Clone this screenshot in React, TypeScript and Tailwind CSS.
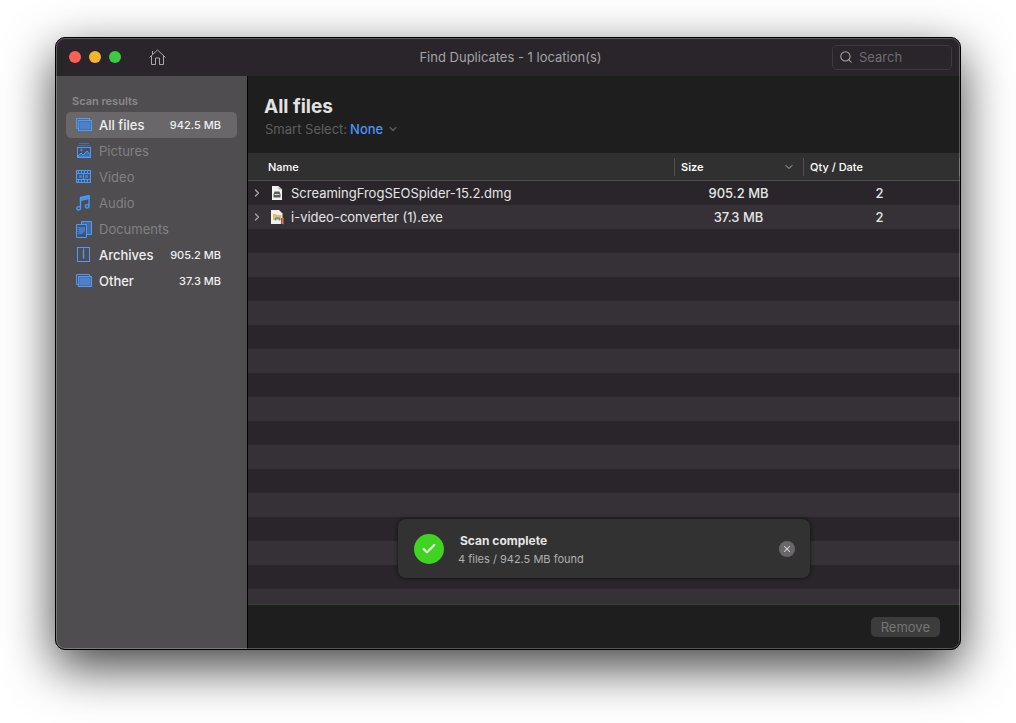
import { useState, type ReactNode } from 'react';
import { Check, ChevronDown, ChevronRight, Search, X } from 'lucide-react';

type Category = { name: string; icon: ReactNode; size?: string };

const StackIcon = () => (
  <svg viewBox="0 0 16 16" className="size-4" fill="none" stroke="#4a9bff">
    <path d="M2.5 11.5h-2v-10h13v2" />
    <rect x="2.5" y="3.5" width="13" height="10" fill="#4f6f9f" />
    <rect x="4" y="5" width="10" height="7" fill="#4f7fc8" stroke="none" />
  </svg>
);

const PicturesIcon = () => (
  <svg viewBox="0 0 16 16" className="size-4" fill="none" stroke="#4a9bff">
    <path d="M3 .5h10M2 2.5h12" opacity=".4" />
    <rect x="1.5" y="4.5" width="13" height="10" fill="#454f61" />
    <path d="M2 13l3-3 2 2 4-4 3.5 4v2H2z" fill="#3f6cab" />
    <circle cx="5.5" cy="7" r=".8" />
  </svg>
);

const VideoIcon = () => (
  <svg viewBox="0 0 16 16" className="size-4" fill="none" stroke="#4a9bff">
    <rect x=".5" y="1.5" width="14" height="12" fill="#44526b" />
    <path d="M3 6h3v3H3zM9 6h3v3H9z" fill="#4a78bb" stroke="none" />
    <path d="M1 4.5h13M1 10.5h13M7.5 4.5v6" />
    <path d="M2 3h12M2 12h12" strokeWidth="2" strokeDasharray="1 2" />
  </svg>
);

const AudioIcon = () => (
  <svg viewBox="0 0 16 16" className="size-4" fill="none" stroke="#4a9bff" strokeWidth="1.3">
    <path d="M4.5 13V2.500l8.500-2V11" />
    <path d="M4.5 3.500L13 1.500v2l-8.500 2z" fill="#3f6cab" />
    <ellipse cx="2.700" cy="13.300" rx="1.900" ry="1.700" />
    <ellipse cx="11.200" cy="11.300" rx="1.900" ry="1.700" />
  </svg>
);

const DocumentsIcon = () => (
  <svg viewBox="0 0 16 17" className="h-[17px] w-4" fill="none" stroke="#4a9bff">
    <path d="M5.5.5h10v13h-10z" fill="#466a9f" />
    <path d="M.5 3.5h10v13H.5z" fill="#44526b" />
    <path d="M3 6h6v4l-3 3H3z" fill="#3f7acb" stroke="none" />
    <path d="M2 6v8" strokeDasharray="1 1" />
  </svg>
);

const ArchiveIcon = () => (
  <svg viewBox="0 0 16 16" className="size-4" fill="none" stroke="#4a9bff">
    <rect x="1.5" y=".5" width="12" height="14" />
    <path d="M7.5 1v11" opacity=".8" />
    <path d="M7.5 3v8" strokeWidth="2" opacity=".5" />
  </svg>
);

const HomeIcon = () => (
  <svg viewBox="0 0 17 17" className="size-[17px]" fill="none" stroke="currentColor">
    <path d="M.5 8.5l8-7.500 8 7.500" />
    <path d="M2.500 7v8.500h4V9h4v6.500h4V7M3.500 5.500V2" />
  </svg>
);

const DiskImageIcon = () => (
  <svg viewBox="0 0 14 14" className="size-[14px]">
    <path d="M1 0h6.500L11 3.500V14H1z" fill="#f4f4f4" />
    <path d="M7.500 0v3.500H11z" fill="#b9b9b9" />
    <path d="M3.500 5.500h5l1 3v3H2.500v-3z" fill="#5b5b5b" />
    <path d="M3.500 8.500h5" stroke="#d8d8d8" />
  </svg>
);

const ExeIcon = () => (
  <svg viewBox="0 0 14 15" className="h-[15px] w-[14px]">
    <path d="M0 0h8l3.500 3.500V14H0z" fill="#f1f1f1" />
    <path d="M2 4h3l1 1h4.500v5H2z" fill="#eebd4f" />
    <path d="M4.500 10.500V9q0-1 1-1h2q1 0 1 1v1.500" fill="none" stroke="#3e8fe0" strokeWidth="1.5" />
    <path d="M10.500 8v6M12.500 8v6.500" stroke="#d63a22" />
  </svg>
);

const categories: Category[] = [
  { name: 'All files', icon: <StackIcon />, size: '942.5 MB' },
  { name: 'Pictures', icon: <PicturesIcon /> },
  { name: 'Video', icon: <VideoIcon /> },
  { name: 'Audio', icon: <AudioIcon /> },
  { name: 'Documents', icon: <DocumentsIcon /> },
  { name: 'Archives', icon: <ArchiveIcon />, size: '905.2 MB' },
  { name: 'Other', icon: <StackIcon />, size: '37.3 MB' },
];

const files = [
  { name: 'ScreamingFrogSEOSpider-15.2.dmg', icon: <DiskImageIcon />, size: '905.2 MB', qty: 2 },
  { name: 'i-video-converter (1).exe', icon: <ExeIcon />, size: '37.3 MB', qty: 2 },
];

const TitleBar = () => (
  <header className="grid h-[38px] shrink-0 grid-cols-[1fr_auto_1fr] items-center bg-[#29252a] pr-2 pl-[13px]">
    <div className="flex items-center gap-2">
      <button aria-label="Close" className="size-3 rounded-full bg-[#fe5f57]" />
      <button aria-label="Minimize" className="size-3 rounded-full bg-[#f6b42c]" />
      <button aria-label="Zoom" className="size-3 rounded-full bg-[#3ec942]" />
      <button aria-label="Home" className="ml-5 text-[#a9a7aa]">
        <HomeIcon />
      </button>
    </div>
    <h1 className="text-[13px] leading-5 text-[#a5a3a6]">Find Duplicates - 1 location(s)</h1>
    <label className="flex h-[25px] w-[120px] items-center gap-1.5 justify-self-end rounded-[5px] border border-[#3d393f] px-1.5">
      <Search className="size-[14px] shrink-0 text-[#a9a7aa]" strokeWidth={1.75} />
      <input
        type="search"
        aria-label="Search"
        placeholder="Search"
        className="h-5 w-full min-w-0 bg-transparent text-[13px] leading-5 text-white outline-none placeholder:text-[#6f6c70]"
      />
    </label>
  </header>
);

const Sidebar = () => {
  const [active, setActive] = useState('All files');

  return (
    <nav className="w-[192px] shrink-0 border-r border-black bg-[#4f4d50] px-2.5 pt-[17px]">
      <h2 className="mb-[3px] px-1.5 text-[11px] leading-4 font-semibold text-[#8b898c]">Scan results</h2>
      {categories.map(({ name, icon, size }) => (
        <button
          key={name}
          disabled={!size}
          onClick={() => setActive(name)}
          className={`flex h-[26px] w-full items-center gap-[7px] rounded-[5px] pr-4 pl-2.5 text-[13px] ${
            active === name ? 'bg-[#69676a]' : ''
          } ${size ? 'font-medium text-[#f0eff0]' : 'text-[#838184]'}`}
        >
          {icon}
          <span className="leading-5">{name}</span>
          <span className="ml-auto text-[11px]">{size}</span>
        </button>
      ))}
    </nav>
  );
};

const FileTable = () => (
  <table className="w-full table-fixed border-separate border-spacing-0 text-[13px] leading-5 text-[#e6e5e6]">
    <colgroup>
      <col />
      <col className="w-[129px]" />
      <col className="w-[157px]" />
    </colgroup>
    <thead>
      <tr className="h-7 bg-[#303030] text-left text-[11px] text-white">
        <th className="border-b border-[#505050] pl-5 font-medium">Name</th>
        <th className="border-b border-[#505050]">
          <div className="flex h-[18px] items-center justify-between border-l border-[#505050] pr-2 pl-1.5 font-semibold">
            Size
            <ChevronDown className="size-3 text-[#b4b4b4]" strokeWidth={2} />
          </div>
        </th>
        <th className="border-b border-[#505050]">
          <div className="flex h-[18px] items-center border-x border-[#505050] pl-1.5 font-medium">Qty / Date</div>
        </th>
      </tr>
    </thead>
    <tbody>
      {files.map((file) => (
        <tr key={file.name} className="h-6">
          <td>
            <div className="flex items-center pl-[3px]">
              <button aria-label={`Expand ${file.name}`} className="text-[#aaa8ab]">
                <ChevronRight className="size-3" strokeWidth={2.5} />
              </button>
              <span className="mr-1.5 ml-2">{file.icon}</span>
              {file.name}
            </div>
          </td>
          <td className="text-center font-medium">{file.size}</td>
          <td className="pr-1 text-center font-medium">{file.qty}</td>
        </tr>
      ))}
    </tbody>
  </table>
);

const Toast = ({ onClose }: { onClose: () => void }) => (
  <div
    role="status"
    className="absolute bottom-[26px] left-1/2 flex h-[59px] w-[412px] -translate-x-1/2 items-center rounded-lg bg-[#323232] pr-[15px] pl-4 shadow-[0_0_4px_rgba(0,0,0,0.6)]"
  >
    <span className="flex size-[30px] items-center justify-center rounded-full bg-[#41d321] text-white">
      <Check className="size-4" strokeWidth={3} />
    </span>
    <div className="ml-[14px] pt-0.5">
      <p className="pl-0.5 text-[12px] leading-[19px] font-bold text-[#e6e6e6]">Scan complete</p>
      <p className="text-[11px] leading-[18px] text-[#b0b0b0]">4 files / 942.5 MB found</p>
    </div>
    <button
      aria-label="Dismiss"
      onClick={onClose}
      className="ml-auto flex size-4 items-center justify-center rounded-full bg-[#69676a] text-[#e0e0e0]"
    >
      <X className="size-2.5" strokeWidth={2.5} />
    </button>
  </div>
);

export default function App() {
  const [toastOpen, setToastOpen] = useState(true);

  return (
    <div className="flex min-h-screen bg-white px-[55px] pt-[37px] pb-[73px] font-['Inter',sans-serif]">
      <div className="relative flex flex-1 flex-col overflow-hidden rounded-[10px] border border-black bg-[#1e1e1e] shadow-[0_17px_50px_rgba(0,0,0,0.75)] after:pointer-events-none after:absolute after:inset-0 after:rounded-[9px] after:border after:border-white/25">
        <TitleBar />
        <div className="flex flex-1">
          <Sidebar />
          <main className="flex min-w-0 flex-1 flex-col">
            <div className="h-[77px] px-4 pt-[19px]">
              <h2 className="text-[19px] leading-6 font-bold text-[#e2e2e2]">All files</h2>
              <div className="flex items-center pl-px text-[13px] leading-5">
                <label htmlFor="smart-select" className="mr-[3px] text-[#5f5f5f]">
                  Smart Select:
                </label>
                <select id="smart-select" className="appearance-none bg-transparent font-medium text-[#4a94f8]">
                  <option>None</option>
                </select>
                <ChevronDown className="ml-[3px] size-3 text-[#5f5f5f]" strokeWidth={2.5} />
              </div>
            </div>
            <div className="relative flex-1 bg-[repeating-linear-gradient(#29252a_0_24px,#353137_24px_48px)] bg-[position:0_28px]">
              <FileTable />
              {toastOpen && <Toast onClose={() => setToastOpen(false)} />}
            </div>
            <footer className="flex h-[45px] items-center justify-end border-t border-[#3c3c3c] pr-5">
              <button disabled className="h-5 rounded-[5px] bg-[#3c3c3c] px-2.5 text-[13px] leading-5 text-[#767676]">
                Remove
              </button>
            </footer>
          </main>
        </div>
      </div>
    </div>
  );
}
